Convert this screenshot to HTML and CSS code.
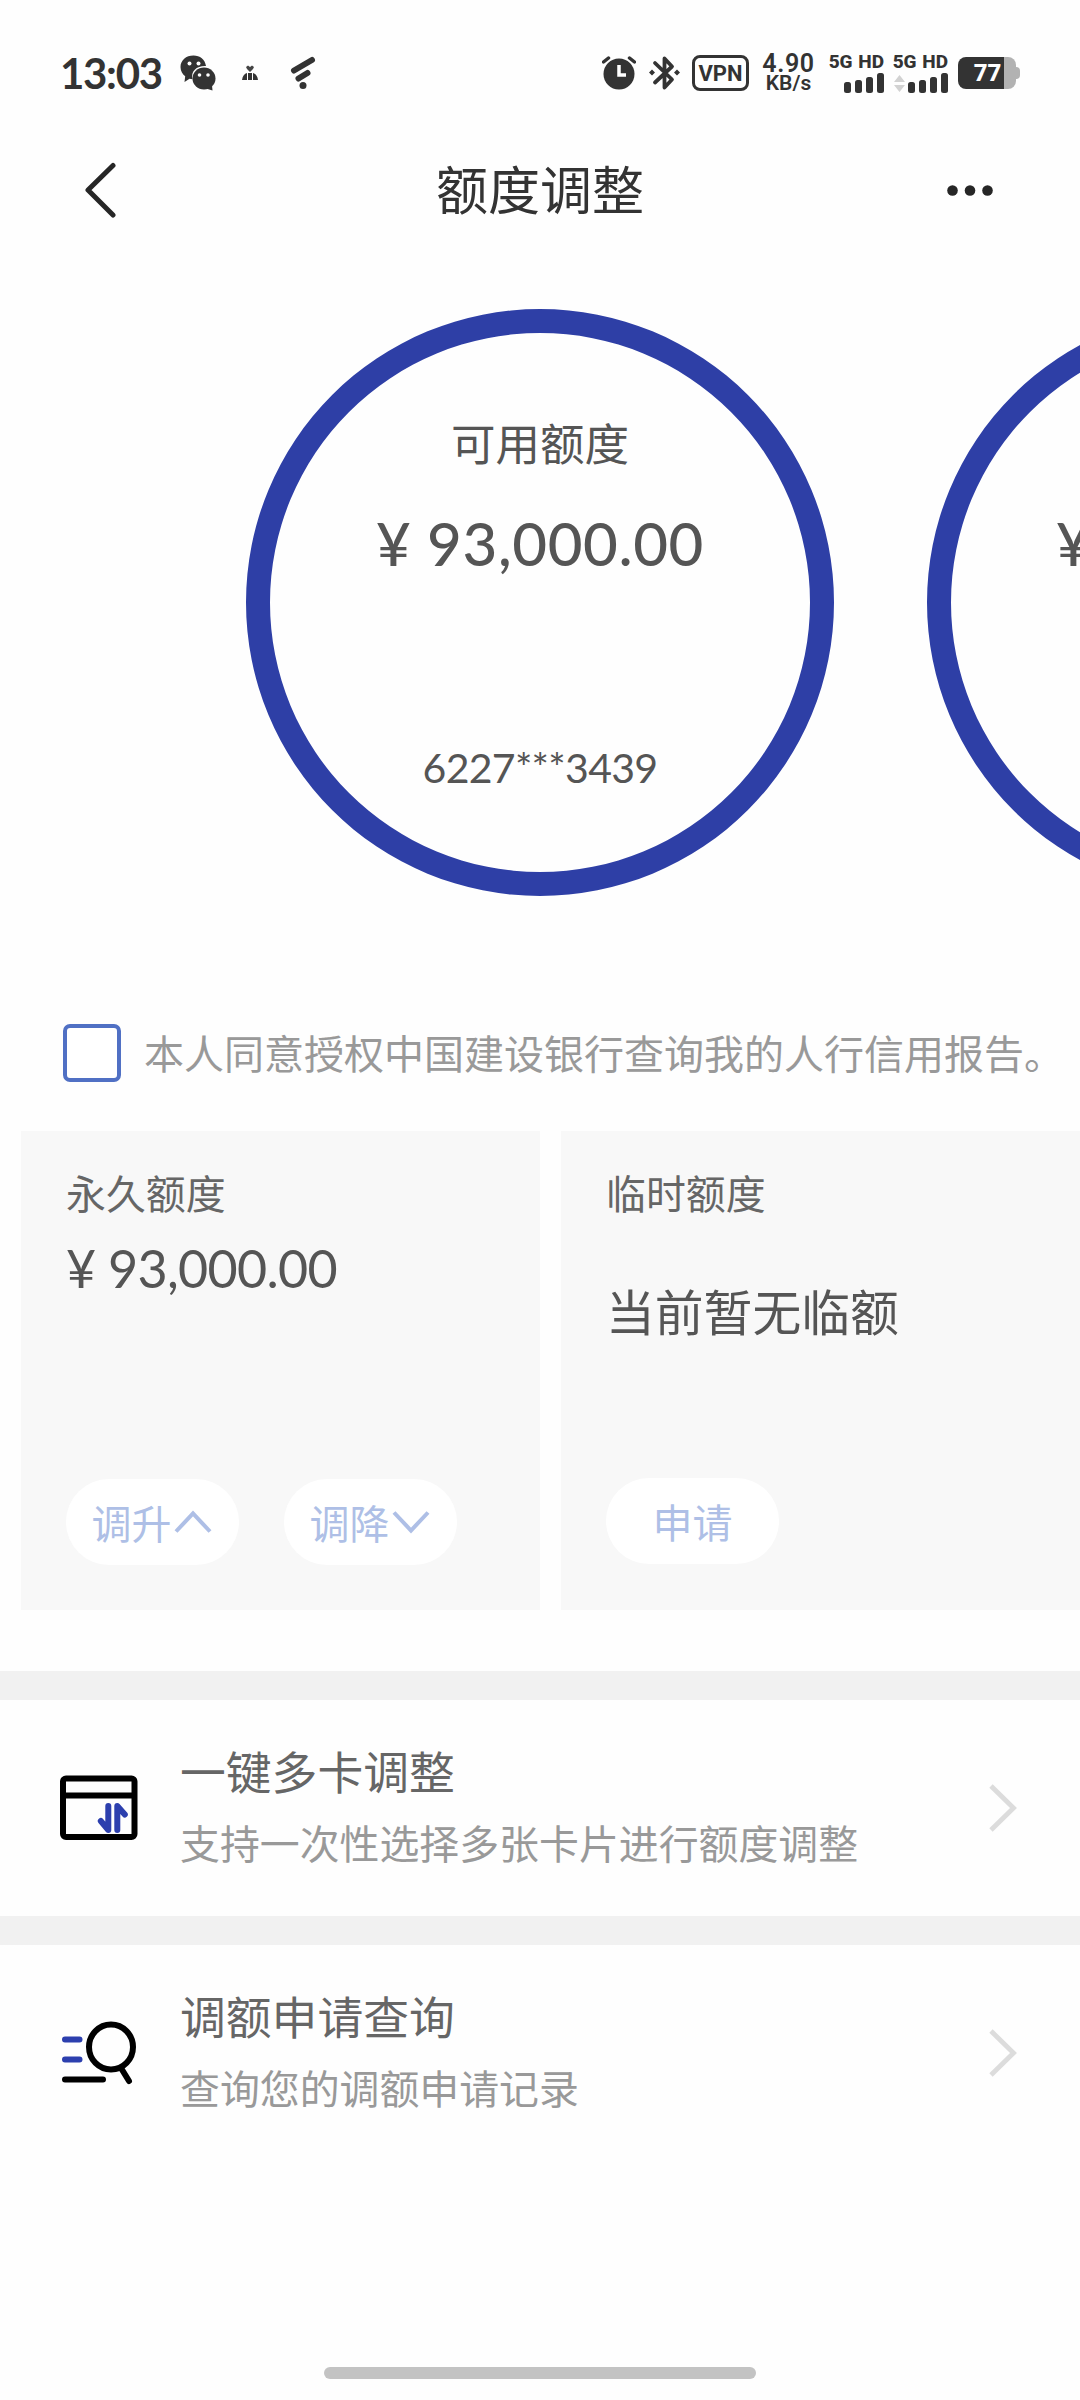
FILE: index.html
```html
<!DOCTYPE html>
<html lang="zh-CN">
<head>
<meta charset="utf-8">
<title>额度调整</title>
<link rel="stylesheet" href="styles.css">
</head>
<body>
<header class="status">
  <div class="status-left">
    <span class="clock">13:03</span>
    <svg class="ic-chat" width="36" height="36" viewBox="0 0 36 36"><path fill="#333" d="M13.500.5C6 .5.5 5.300.5 12c0 4 1.900 7 4.700 9.300L4.500 27l5-3.200c1 .3 2 .3 3 .4C10.500 16 17 10.500 26 11 25 4.500 20 .5 13.500.5z"/><ellipse cx="24" cy="23.500" rx="11.500" ry="11" fill="#333"/><path fill="#333" d="M26 33.500l6.500 2-.5-5z"/><g fill="#fff"><circle cx="9.500" cy="8.500" r="2"/><circle cx="18.500" cy="8.500" r="2"/><circle cx="19.500" cy="20" r="1.800"/><circle cx="28" cy="20" r="1.800"/></g></svg>
    <svg class="ic-person" width="16" height="16" viewBox="0 0 16 16"><path d="M4 2l2-1.500L8 2l2-1.500L12 2l-1 2-3 3-3-3z" fill="#444"/><path d="M0 15c.5-4 2.500-6.500 5-7v7zM6 8h4v7H6zM11 8c2.500.5 4.500 3 5 7h-5z" fill="#333"/></svg>
    <svg class="ic-wing" width="26" height="34" viewBox="0 0 26 34"><g stroke="#333" stroke-width="6" stroke-linecap="round"><path d="M4 14.500L22 4M8.500 22.500l9-5.500"/></g><circle cx="13" cy="29.500" r="3.500" fill="#333"/></svg>
  </div>
  <div class="status-right">
    <svg class="ic-alarm" width="34" height="34" viewBox="0 0 34 34"><circle cx="17" cy="18" r="15.500" fill="#333"/><path d="M1.500 6l5-4M32.500 6l-5-4" stroke="#333" stroke-width="3.500" stroke-linecap="round"/><path d="M17 9v10h7" fill="none" stroke="#fff" stroke-width="3.500"/></svg>
    <svg class="ic-bt" width="32" height="36" viewBox="0 0 32 36"><path d="M6 8l17 16.500-7.500 8V3.500l7.500 8L6 27.500" fill="none" stroke="#333" stroke-width="3.800" stroke-linejoin="round" stroke-linecap="round"/><path d="M3 14.500l3 3-3 3-3-3zM28 14.500l3 3-3 3-3-3z" fill="#333"/></svg>
    <span class="vpn">VPN</span>
    <div class="speed"><span class="speed-n">4.90</span><span class="speed-u">KB/s</span></div>
    <div class="sim"><span class="sim-t">5G HD</span><svg width="40" height="20" viewBox="0 0 40 20"><g fill="#333"><rect y="9" width="7" height="11" rx="2.500"/><rect x="11" y="7" width="7" height="13" rx="2.500"/><rect x="22" y="4" width="7" height="16" rx="2.500"/><rect x="33" width="7" height="20" rx="2.500"/></g></svg></div>
    <div class="sim"><span class="sim-t">5G HD</span><svg width="54" height="20" viewBox="0 0 54 20"><path fill="#d2d2d2" d="M0 9l5.500-7L11 9zM0 12h11l-5.500 7z"/><g fill="#333"><rect x="14" y="9" width="7" height="11" rx="2.500"/><rect x="25" y="7" width="7" height="13" rx="2.500"/><rect x="36" y="4" width="7" height="16" rx="2.500"/><rect x="47" width="7" height="20" rx="2.500"/></g></svg></div>
    <div class="battery"><span class="battery-body">77</span><span class="battery-tip"></span></div>
  </div>
</header>

<nav class="nav">
  <svg width="34" height="58" viewBox="0 0 34 58"><path d="M29 3.500L4 28l25 25" fill="none" stroke="#262626" stroke-width="5" stroke-linecap="round" stroke-linejoin="round"/></svg>
  <h1 class="nav-title">额度调整</h1>
  <svg width="46" height="12" viewBox="0 0 46 12"><g fill="#262626"><circle cx="5.500" cy="5.500" r="5.300"/><circle cx="23" cy="5.500" r="5.300"/><circle cx="40.500" cy="5.500" r="5.300"/></g></svg>
</nav>

<section class="carousel">
  <div class="ring"><span class="ring-label">可用额度</span><span class="ring-amount">¥ 93,000.00</span><span class="ring-card">6227***3439</span></div>
  <div class="ring ring-next"><span class="ring-amount">¥</span></div>
</section>

<label class="agree"><span class="box"></span><span class="agree-text">本人同意授权中国建设银行查询我的人行信用报告。</span></label>

<section class="cards">
  <div class="card">
    <span class="card-label">永久额度</span>
    <span class="card-amount">¥ 93,000.00</span>
    <div class="btns">
      <span class="btn">调升<svg width="38" height="24" viewBox="0 0 38 24"><path d="M2 21.500L19 3.500l17 18" fill="none" stroke="#aebfe6" stroke-width="4"/></svg></span>
      <span class="btn">调降<svg width="38" height="24" viewBox="0 0 38 24"><path d="M2 2.500l17 18 17-18" fill="none" stroke="#aebfe6" stroke-width="4"/></svg></span>
    </div>
  </div>
  <div class="card card-temp">
    <span class="card-label">临时额度</span>
    <span class="card-none">当前暂无临额</span>
    <div class="btns"><span class="btn btn-apply">申请</span></div>
  </div>
</section>

<section class="menu">
  <div class="row">
    <svg class="row-icon" width="78" height="66" viewBox="0 0 78 66"><g fill="none" stroke="#000" stroke-width="6"><rect x="3" y="3.500" width="71.500" height="58.500" rx="3"/><path d="M3 20.500h71"/></g><path d="M48.300 31v24l-7.500-9M57.300 55V31l7.500 8.500" fill="none" stroke="#2c3fae" stroke-width="6" stroke-linecap="round" stroke-linejoin="round"/></svg>
    <div class="row-text"><span class="row-title">一键多卡调整</span><span class="row-sub">支持一次性选择多张卡片进行额度调整</span></div>
    <svg width="28" height="48" viewBox="0 0 28 48"><path d="M2 2l22.500 22L2 46" fill="none" stroke="#dcdcdc" stroke-width="4.800"/></svg>
  </div>
  <div class="row">
    <svg class="row-icon" width="78" height="66" viewBox="0 0 78 66"><ellipse cx="51" cy="27" rx="22" ry="22.500" fill="none" stroke="#000" stroke-width="6"/><path d="M61 48l8 13M5 59.500h38" stroke="#000" stroke-width="6" stroke-linecap="round"/><path d="M5 19.500h14.500M5 39.500h14.500" stroke="#2c3fae" stroke-width="6" stroke-linecap="round"/></svg>
    <div class="row-text"><span class="row-title">调额申请查询</span><span class="row-sub">查询您的调额申请记录</span></div>
    <svg width="28" height="48" viewBox="0 0 28 48"><path d="M2 2l22.500 22L2 46" fill="none" stroke="#dcdcdc" stroke-width="4.800"/></svg>
  </div>
</section>
<div class="home-bar"></div>
</body>
</html>
```
FILE: styles.css
```css
* { box-sizing: border-box; }
body {
  margin: 0;
  width: 1080px;
  height: 2400px;
  display: flex;
  flex-direction: column;
  overflow: hidden;
  background: #fefefe;
  color: #555;
  font-family: Lato, "Noto Sans CJK SC", sans-serif;
}
svg { display: block; flex: none; }
span, h1 { white-space: nowrap; }

.status {
  height: 146px;
  padding: 0 60px 0 60px;
  display: flex;
  justify-content: space-between;
  align-items: center;
  color: #333;
}
.status-left, .status-right { display: flex; align-items: center; }
.clock { font-size: 42px; font-weight: 700; line-height: 50px; width: 103px; letter-spacing: -1.300px; }
.ic-chat { margin-left: 17px; }
.ic-person { margin-left: 26px; }
.ic-wing { margin-left: 32px; }
.ic-bt { margin-left: 13px; }
.vpn {
  margin-left: 11px;
  width: 57px;
  height: 36px;
  border: 3px solid #333;
  border-radius: 8px;
  font: 700 22px/31px Roboto, sans-serif;
  text-align: center;
}
.speed { margin-left: 13px; width: 53px; display: flex; flex-direction: column; align-items: center; font-family: Roboto, sans-serif; }
.speed-n { font-size: 25px; line-height: 20px; font-weight: 600; letter-spacing: .6px; }
.speed-u { font-size: 21px; line-height: 18px; font-weight: 600; }
.sim { margin-left: 14px; width: 55px; display: flex; flex-direction: column; align-items: flex-end; gap: 3px; }
.sim + .sim { margin-left: 9px; }
.sim-t { font: 800 19px/16px Roboto, sans-serif; word-spacing: 1px; }
.battery { margin-left: 10px; display: flex; align-items: center; }
.battery-body {
  width: 58px;
  height: 32px;
  padding-left: 1px;
  border-radius: 8px;
  background: linear-gradient(90deg, #333 46px, #b2b2b2 46px);
  color: #fff;
  font: 800 24px/32px Roboto, sans-serif;
  text-align: center;
}
.battery-tip { width: 4px; height: 12px; background: #b2b2b2; border-radius: 0 4px 4px 0; }

.nav {
  height: 90px;
  padding: 0 87px 0 84px;
  display: grid;
  grid-template-columns: 58px 1fr 55px;
  align-items: center;
}
.nav > :last-child { justify-self: end; }
.nav-title { margin: 0 0 3px; font-size: 52px; line-height: 60px; font-weight: 400; color: #333; text-align: center; }

.carousel { margin-top: 73px; padding-left: 246px; display: flex; gap: 93px; overflow: hidden; }
.ring {
  flex: none;
  width: 588px;
  height: 587px;
  padding-top: 81px;
  border: 24px solid #2e3fa6;
  border-radius: 50%;
  display: flex;
  flex-direction: column;
  align-items: center;
}
.ring-label { font-size: 44.500px; line-height: 60px; }
.ring-amount { margin-top: 33px; font-size: 60px; line-height: 72px; font-weight: 500; letter-spacing: .6px; }
.ring-next { padding: 141px 0 0 105px; align-items: flex-start; }
.ring-card { margin-top: 164px; font-size: 41px; line-height: 50px; letter-spacing: -.7px; }

.agree { margin-top: 128px; height: 58px; padding-left: 63px; display: flex; align-items: center; }
.box { width: 58px; height: 58px; border: 4px solid #5070c4; border-radius: 7px; background: #fff; }
.agree-text { margin: 2px 0 0 23px; font-size: 40px; line-height: 58px; color: #999; }

.cards { margin-top: 49px; padding-left: 21px; display: flex; gap: 21px; }
.card { width: 519px; height: 479px; padding: 38px 0 45px 45px; background: #f8f8f8; display: flex; flex-direction: column; }
.card-label { font-size: 39.900px; line-height: 50px; color: #666; }
.card-amount { margin-top: 19px; font-size: 52px; line-height: 60px; letter-spacing: -.7px; }
.card-none { margin-top: 63px; font-size: 48.800px; line-height: 60px; }
.btns { margin-top: auto; display: flex; gap: 45px; }
.card-temp .btns { margin-bottom: 1px; }
.btn {
  width: 173px;
  height: 86px;
  padding-right: 2px;
  border-radius: 43px;
  background: #fff;
  color: #aebfe6;
  font-size: 40px;
  display: flex;
  align-items: center;
  justify-content: center;
  gap: 2px;
}
.btn-apply { padding-right: 0; }

.menu { margin-top: 61px; }
.row { height: 245px; padding: 0 63px 0 60px; border-top: 29px solid #f1f1f1; display: flex; align-items: center; }
.row-icon { margin-right: 42px; }
.row-text { flex: 1; margin-bottom: 5px; display: flex; flex-direction: column; }
.row-title { font-size: 45.800px; line-height: 60px; color: #666; }
.row-sub { margin-top: 16px; font-size: 39.900px; line-height: 50px; color: #999; }

.home-bar { margin: auto auto 21px; width: 432px; height: 12px; border-radius: 6px; background: #c3c3c3; }
```
